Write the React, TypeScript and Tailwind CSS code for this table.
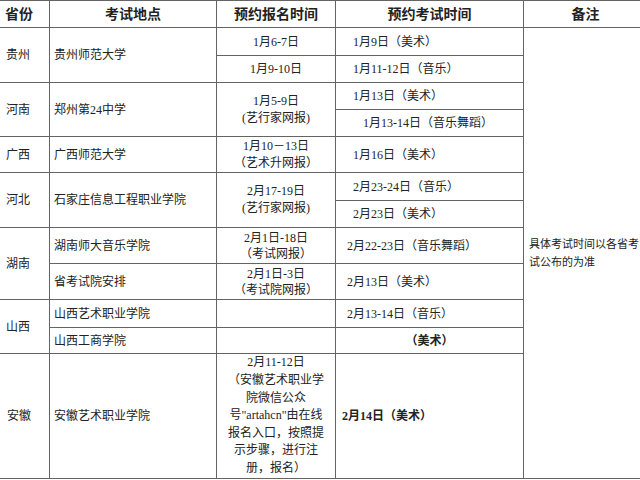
import React from "react";

const F = "font-[family-name:'Liberation_Serif','Noto_Sans_CJK_SC',serif]";

function C({ className = "", children }: { className?: string; children?: React.ReactNode }) {
  return <div className={`bg-white flex items-center text-[#222] ${F} ${className}`}>{children}</div>;
}

function L({ children }: { children: React.ReactNode }) {
  return <span className="block">{children}</span>;
}

const B = "text-[12px]";
const H = "text-[14px] font-bold";

export default function App() {
  return (
    <div className={`w-[640px] h-[480px] overflow-hidden bg-white ${F}`}>
      <div className="w-[647px] grid grid-cols-[49px_166px_118px_187px_123px] grid-rows-[26px_27px_26px_26px_26px_35px_27px_26px_35px_35px_27px_25px_124px] gap-px bg-[#646464] pt-px pb-px">
        {/* header */}
        <C className={`col-start-1 row-start-1 pl-[5px] ${H}`}>省份</C>
        <C className={`col-start-2 row-start-1 justify-center ${H}`}>考试地点</C>
        <C className={`col-start-3 row-start-1 justify-center ${H}`}>预约报名时间</C>
        <C className={`col-start-4 row-start-1 justify-center ${H}`}>预约考试时间</C>
        <C className={`col-start-5 row-start-1 justify-center ${H}`}>备注</C>

        {/* 贵州 */}
        <C className={`col-start-1 row-start-2 row-span-2 pl-[6px] ${B}`}>贵州</C>
        <C className={`col-start-2 row-start-2 row-span-2 pl-[4px] ${B}`}>贵州师范大学</C>
        <C className={`col-start-3 row-start-2 justify-center ${B}`}>1月6-7日</C>
        <C className={`col-start-3 row-start-3 justify-center ${B}`}>1月9-10日</C>
        <C className={`col-start-4 row-start-2 pl-[17px] ${B}`}>1月9日（美术）</C>
        <C className={`col-start-4 row-start-3 pl-[17px] ${B}`}>1月11-12日（音乐）</C>

        {/* 备注 */}
        <C className="col-start-5 row-start-2 row-span-12 pl-[5px]">
          <div className="text-[11px] leading-[18px] whitespace-nowrap">
            <L>具体考试时间以各省考</L>
            <L>试公布的为准</L>
          </div>
        </C>

        {/* 河南 */}
        <C className={`col-start-1 row-start-4 row-span-2 pl-[6px] ${B}`}>河南</C>
        <C className={`col-start-2 row-start-4 row-span-2 pl-[4px] ${B}`}>郑州第24中学</C>
        <C className={`col-start-3 row-start-4 row-span-2 justify-center text-center leading-[17px] ${B}`}>
          <div>
            <L>1月5-9日</L>
            <L>(艺行家网报)</L>
          </div>
        </C>
        <C className={`col-start-4 row-start-4 pl-[17px] ${B}`}>1月13日（美术）</C>
        <C className={`col-start-4 row-start-5 pl-[27px] ${B}`}>1月13-14日（音乐舞蹈）</C>

        {/* 广西 */}
        <C className={`col-start-1 row-start-6 pl-[6px] ${B}`}>广西</C>
        <C className={`col-start-2 row-start-6 pl-[4px] ${B}`}>广西师范大学</C>
        <C className={`col-start-3 row-start-6 justify-center text-center leading-[17px] ${B}`}>
          <div>
            <L>1月10－13日</L>
            <L>（艺术升网报）</L>
          </div>
        </C>
        <C className={`col-start-4 row-start-6 pl-[17px] ${B}`}>1月16日（美术）</C>

        {/* 河北 */}
        <C className={`col-start-1 row-start-7 row-span-2 pl-[6px] ${B}`}>河北</C>
        <C className={`col-start-2 row-start-7 row-span-2 pl-[4px] ${B}`}>石家庄信息工程职业学院</C>
        <C className={`col-start-3 row-start-7 row-span-2 justify-center text-center leading-[17px] ${B}`}>
          <div>
            <L>2月17-19日</L>
            <L>(艺行家网报)</L>
          </div>
        </C>
        <C className={`col-start-4 row-start-7 pl-[17px] ${B}`}>2月23-24日（音乐）</C>
        <C className={`col-start-4 row-start-8 pl-[17px] ${B}`}>2月23日（美术）</C>

        {/* 湖南 */}
        <C className={`col-start-1 row-start-9 row-span-2 pl-[6px] ${B}`}>湖南</C>
        <C className={`col-start-2 row-start-9 pl-[4px] ${B}`}>湖南师大音乐学院</C>
        <C className={`col-start-2 row-start-10 pl-[4px] ${B}`}>省考试院安排</C>
        <C className={`col-start-3 row-start-9 justify-center text-center leading-[16px] ${B}`}>
          <div>
            <L>2月1日-18日</L>
            <L>（考试网报）</L>
          </div>
        </C>
        <C className={`col-start-3 row-start-10 justify-center text-center leading-[16px] ${B}`}>
          <div>
            <L>2月1日-3日</L>
            <L>（考试院网报）</L>
          </div>
        </C>
        <C className={`col-start-4 row-start-9 pl-[11px] ${B}`}>2月22-23日（音乐舞蹈）</C>
        <C className={`col-start-4 row-start-10 pl-[11px] ${B}`}>2月13日（美术）</C>

        {/* 山西 */}
        <C className={`col-start-1 row-start-11 row-span-2 pl-[6px] ${B}`}>山西</C>
        <C className={`col-start-2 row-start-11 pl-[4px] ${B}`}>山西艺术职业学院</C>
        <C className={`col-start-2 row-start-12 pl-[4px] ${B}`}>山西工商学院</C>
        <C className="col-start-3 row-start-11"></C>
        <C className="col-start-3 row-start-12"></C>
        <C className={`col-start-4 row-start-11 pl-[11px] ${B}`}>2月13-14日（音乐）</C>
        <C className={`col-start-4 row-start-12 justify-center font-bold ${B}`}>（美术）</C>

        {/* 安徽 */}
        <C className={`col-start-1 row-start-13 pl-[7px] ${B}`}>安徽</C>
        <C className={`col-start-2 row-start-13 pl-[4px] ${B}`}>安徽艺术职业学院</C>
        <C className={`col-start-3 row-start-13 justify-center text-center leading-[17.6px] ${B}`}>
          <div>
            <L>2月11-12日</L>
            <L>（安徽艺术职业学</L>
            <L>院微信公众</L>
            <L>号"artahcn"由在线</L>
            <L>报名入口，按照提</L>
            <L>示步骤，进行注</L>
            <L>册，报名）</L>
          </div>
        </C>
        <C className={`col-start-4 row-start-13 pl-[6px] font-bold ${B}`}>2月14日（美术）</C>
      </div>
    </div>
  );
}
